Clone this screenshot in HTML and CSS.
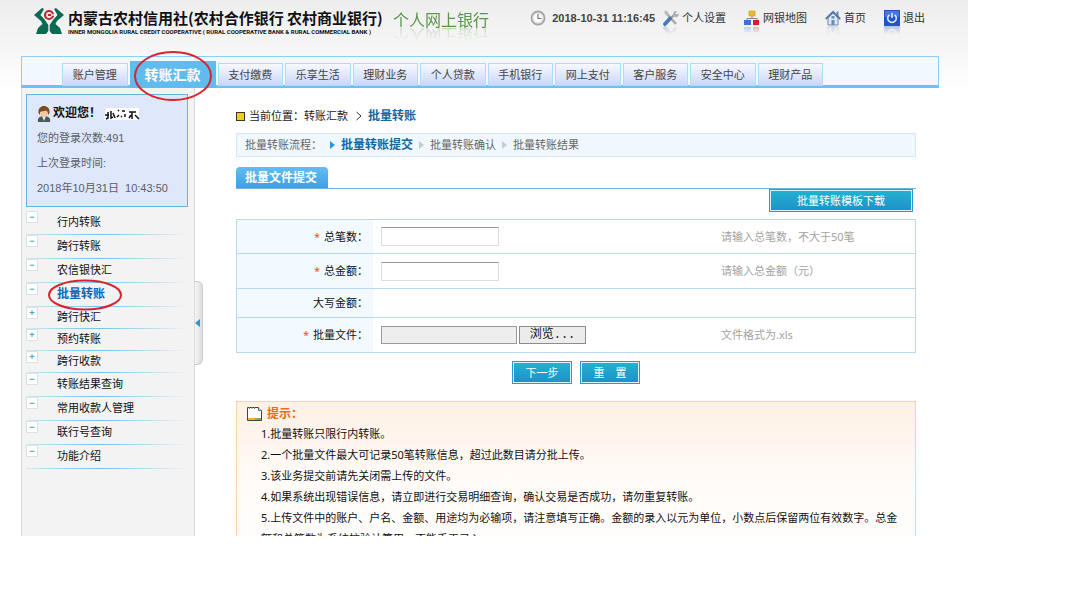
FILE: index.html
```html
<!DOCTYPE html>
<html lang="zh-CN">
<head>
<meta charset="utf-8">
<title>个人网上银行 - 批量转账</title>
<link rel="stylesheet" href="styles.css">
</head>
<body>
<div class="page">
  <header class="header">
    <svg class="logo" viewBox="0 0 30 28" aria-hidden="true">
      <path fill="#0d6a52" d="M8 1 0 8l7 6 1.500 3L4 21l-2 6h10l2.300-3v-6L11 13 6.500 8 10 2zM22 1l8 7-7 6-1.500 3 4.500 4 2 6H18l-2.300-3v-6l3.300-5 4.500-5L20 2z"/>
      <circle cx="15" cy="8" r="4" fill="none" stroke="#c4232c" stroke-width="2.200"/>
      <path fill="#f3f3f3" d="M16 7.300h4v1.400h-4z"/>
      <path fill="#c4232c" d="M14 7h3v2h-3z"/>
    </svg>
    <div class="brand">
      <h1 class="brand-name">内蒙古农村信用社(农村合作银行 农村商业银行)</h1>
      <p class="brand-en">INNER MONGOLIA RURAL CREDIT COOPERATIVE ( RURAL COOPERATIVE BANK &amp; RURAL COMMERCIAL BANK )</p>
    </div>
    <div class="product">个人网上银行</div>
    <div class="tools">
      <span class="clock">
        <svg class="icon" viewBox="0 0 16 16" aria-hidden="true"><circle cx="8" cy="8" r="6.500" fill="#fafafa" stroke="#a3a3a3" stroke-width="1.800"/><circle cx="8" cy="8" r="4.800" fill="none" stroke="#d8d8d8" stroke-width=".8"/><path d="M8 4v4.500h3.500" fill="none" stroke="#777" stroke-width="1.200"/></svg>
        <time>2018-10-31 11:16:45</time>
      </span>
      <a class="tool" href="#">
        <svg class="icon reflect" viewBox="0 0 16 16" aria-hidden="true"><path d="M3 3l10 11" stroke="#a9a9a9" stroke-width="2.600"/><path d="M1 2l2-1.500L5.500 3 5 5 3 5z" fill="#b9b9b9"/><path d="M7 9l5-5" stroke="#9b9b9b" stroke-width="2"/><path d="M11 1.500 14 1l-1.500 2.500 1.500 1L16 3l-.5 3-3 1.500-3-2z" fill="#a9afb5"/><path d="M2 14l5-5.500" stroke="#4a7ab0" stroke-width="3.800" stroke-linecap="round"/></svg>个人设置</a>
      <a class="tool" href="#">
        <svg class="icon reflect" viewBox="0 0 16 16" aria-hidden="true"><path d="M8 5v4M3 11V8.500h10V11" fill="none" stroke="#888"/><path fill="#e9bd2c" stroke="#c49716" stroke-width=".6" d="M5 1h6v5H5z"/><path fill="#3c6fe0" d="M0 10h7v5H0z"/><path fill="#d5202a" d="M9 10h6v5H9z"/></svg>网银地图</a>
      <a class="tool" href="#">
        <svg class="icon reflect" viewBox="0 0 16 16" aria-hidden="true"><path fill="#6686b2" d="M11.500 1.500h2V6h-2z"/><path fill="#dfe8f3" stroke="#6a88b3" d="M3 8l5-5 5 5v7H3z"/><path d="M.8 9 8 1.800 15.200 9" fill="none" stroke="#577cac" stroke-width="2"/><path fill="#6b8db9" d="M6.500 10h3v5h-3zM6.500 6h3v2.500h-3z"/></svg>首页</a>
      <a class="tool" href="#">
        <svg class="icon reflect" viewBox="0 0 16 16" aria-hidden="true"><path fill="#2353c4" d="M0 0h16v16H0z"/><path fill="#4976dc" d="M1 1h14v6H1z"/><path d="M5.300 4.800a4.300 4.300 0 1 0 5.400 0M8 2.800V8" fill="none" stroke="#e4eeff" stroke-width="1.500"/></svg>退出</a>
    </div>
  </header>

  <nav class="nav">
    <ul class="tabs">
      <li class="tab"><a href="#">账户管理</a></li>
      <li class="tab tab-active"><a href="#">转账汇款</a>
        <svg class="ring ring-tab" viewBox="0 0 80 52" aria-hidden="true"><ellipse cx="40" cy="26" rx="38" ry="24" fill="none" stroke="#d9232e" stroke-width="2"/></svg></li>
      <li class="tab"><a href="#">支付缴费</a></li>
      <li class="tab"><a href="#">乐享生活</a></li>
      <li class="tab"><a href="#">理财业务</a></li>
      <li class="tab"><a href="#">个人贷款</a></li>
      <li class="tab"><a href="#">手机银行</a></li>
      <li class="tab"><a href="#">网上支付</a></li>
      <li class="tab"><a href="#">客户服务</a></li>
      <li class="tab"><a href="#">安全中心</a></li>
      <li class="tab"><a href="#">理财产品</a></li>
    </ul>
  </nav>

  <div class="body">
    <aside class="sidebar">
      <section class="user">
        <p class="hello">
          <svg class="avatar" viewBox="0 0 14 16" aria-hidden="true"><path fill="#4e5a55" d="M1 16c-1-4 2-6 6-6s7 2 6 6z"/><path fill="#e8eef0" d="M5 10h4l-2 5z"/><circle cx="7" cy="6.500" r="4.200" fill="#f3c9a0"/><path fill="#7b4a1e" d="M1.500 7C1 2 4 0 7 0s6 2 5.500 7L11 9c.3-3-1-4-2-4.500C7 5.500 4 5 3 6v3z"/></svg>
          欢迎您！
          <svg class="masked" viewBox="0 0 38 12" aria-hidden="true"><path fill="#fff" d="M3 0h33v12H1z"/><path d="M2 7h4M5 4v6l-2 1M8 3v7l2-1M10 5l2 5M15 2l1 1M14 9l2-2M19 3h3M22 6v3M18 8l1 1M26 4h7M29 4v7M26 10l2-3M32 7l4 4" fill="none" stroke="#111" stroke-width="1.500"/></svg>
        </p>
        <p>您的登录次数:491</p>
        <p>上次登录时间:</p>
        <p>2018年10月31日&nbsp; 10:43:50</p>
      </section>
      <ul class="menu">
        <li class="item"><i class="box">−</i><a href="#">行内转账</a></li>
        <li class="item"><i class="box">−</i><a href="#">跨行转账</a></li>
        <li class="item"><i class="box">−</i><a href="#">农信银快汇</a></li>
        <li class="item item-active"><i class="box">−</i><a href="#">批量转账</a>
          <svg class="ring ring-item" viewBox="0 0 76 32" aria-hidden="true"><ellipse cx="38" cy="16" rx="36" ry="14.500" fill="none" stroke="#d9232e" stroke-width="2"/></svg></li>
        <li class="item item-short"><i class="box">+</i><a href="#">跨行快汇</a></li>
        <li class="item item-short"><i class="box">+</i><a href="#">预约转账</a></li>
        <li class="item item-short"><i class="box">+</i><a href="#">跨行收款</a></li>
        <li class="item"><i class="box">−</i><a href="#">转账结果查询</a></li>
        <li class="item"><i class="box">−</i><a href="#">常用收款人管理</a></li>
        <li class="item"><i class="box">−</i><a href="#">联行号查询</a></li>
        <li class="item"><i class="box">−</i><a href="#">功能介绍</a></li>
      </ul>
    </aside>
    <button class="handle" type="button" aria-label="收起菜单"><svg class="handle-arrow" viewBox="0 0 5 8" aria-hidden="true"><path fill="#2b95d3" d="M5 0v8L0 4z"/></svg></button>

    <main class="main">
      <p class="crumbs"><i class="marker"></i><span>当前位置：</span><a href="#">转账汇款</a><svg class="chevron" viewBox="0 0 6 10" aria-hidden="true"><path d="M.5 1 5 5 .5 9" fill="none" stroke="#333"/></svg><strong>批量转账</strong></p>
      <div class="steps">
        <span class="steps-title">批量转账流程：</span>
        <span class="step step-active">批量转账提交</span>
        <span class="step">批量转账确认</span>
        <span class="step">批量转账结果</span>
      </div>
      <div class="section-head"><h2 class="section-tab">批量文件提交</h2></div>
      <div class="download"><button class="btn btn-wide" type="button">批量转账模板下载</button></div>

      <form class="form">
        <div class="row">
          <label class="label" for="count"><b class="star">*</b> 总笔数：</label>
          <div class="field"><input class="text" id="count" type="text"></div>
          <div class="hint">请输入总笔数，不大于50笔</div>
        </div>
        <div class="row">
          <label class="label" for="amount"><b class="star">*</b> 总金额：</label>
          <div class="field"><input class="text" id="amount" type="text"></div>
          <div class="hint">请输入总金额（元）</div>
        </div>
        <div class="row row-short">
          <span class="label">大写金额：</span>
          <div class="field"></div>
          <div class="hint"></div>
        </div>
        <div class="row">
          <label class="label" for="file"><b class="star">*</b> 批量文件：</label>
          <div class="field"><input class="file" id="file" type="text" readonly><button class="browse" type="button">浏览...</button></div>
          <div class="hint">文件格式为.xls</div>
        </div>
      </form>
      <div class="actions">
        <button class="btn" type="button">下一步</button>
        <button class="btn" type="button">重&emsp;置</button>
      </div>

      <section class="tips">
        <h3 class="tips-title"><svg class="note" viewBox="0 0 15 15" aria-hidden="true"><path fill="#fff" stroke="#444" d="M.5 1.500h11l3 3v10H.5z"/><path fill="#f2b233" d="M1 12h7v2H1z"/><path fill="#7fae4a" d="M8 12h6v2H8z"/><path fill="#fff" stroke="#444" stroke-width=".8" d="M11.500 1.500v3h3"/><path d="M2.500 1v2M5 1v2M7.500 1v2" stroke="#777"/></svg>提示：</h3>
        <ol class="tips-list">
          <li>1.批量转账只限行内转账。</li>
          <li>2.一个批量文件最大可记录50笔转账信息，超过此数目请分批上传。</li>
          <li>3.该业务提交前请先关闭需上传的文件。</li>
          <li>4.如果系统出现错误信息，请立即进行交易明细查询，确认交易是否成功，请勿重复转账。</li>
          <li>5.上传文件中的账户、户名、金额、用途均为必输项，请注意填写正确。金额的录入以元为单位，小数点后保留两位有效数字。总金额和总笔数为系统校验计算用，不能手工录入。</li>
        </ol>
      </section>
    </main>
  </div>
</div>
</body>
</html>
```
FILE: styles.css
```css
* { box-sizing: border-box; margin: 0; padding: 0; }
body {
  background: #fff;
  font: 11px/20px "Noto Sans", "Noto Sans CJK SC", sans-serif;
  color: #222;
}
ul, ol { list-style: none; }
a { color: inherit; text-decoration: none; }
svg { display: block; flex: none; }
button, input { font: inherit; }

.page {
  margin-right: 112px;
  height: calc(100vh - 72px);
  overflow: hidden;
  background: linear-gradient(#ededed, #fff 92px);
}

/* header */
.header { display: flex; align-items: flex-start; height: 56px; padding: 7px 43px 0 34px; }
.logo { width: 30px; height: 28px; }
.brand { margin-left: 4px; white-space: nowrap; width: 316px; }
.brand-name { font: 700 15px/22px "Noto Sans CJK SC", sans-serif; color: #111; }
.brand-en { font: 700 6px/6px Roboto, sans-serif; color: #111; }
.product {
  margin-left: 9px;
  font-size: 16px;
  line-height: 20px;
  margin-top: 3px;
  white-space: nowrap;
  color: #5b9649;
  -webkit-box-reflect: below -5px linear-gradient(transparent 20%, rgba(0, 0, 0, .35));
}
.tools { display: flex; gap: 18px; margin-left: auto; line-height: 22px; color: #333; white-space: nowrap; }
.clock { display: flex; align-items: center; gap: 6px; margin-right: -10px; color: #444; font: 700 11px/22px "Liberation Sans", sans-serif; }
.tool { display: flex; align-items: center; gap: 3px; }
.icon { width: 16px; height: 16px; }
.reflect { -webkit-box-reflect: below 0 linear-gradient(transparent 45%, rgba(0, 0, 0, .3)); }

/* main navigation */
.nav {
  margin: 0 29px 0 21px;
  height: 32px;
  padding: 4px 115px 0 40px;
  border: 1px solid #8fcdf6;
  border-bottom: 3px solid #6cc0f3;
  background: #f1f9ff;
}
.tabs { display: flex; gap: 2px; align-items: flex-start; }
.tab {
  flex: 1 1 0;
  margin-top: 2px;
  height: 23px;
  border: 1px solid #a9def9;
  background: linear-gradient(#f7f9ff, #cbd6fa);
  text-align: center;
  line-height: 21px;
  white-space: nowrap;
  color: #444;
}
.tab-active {
  position: relative;
  flex: 0 0 86px;
  margin-top: 0;
  height: 27px;
  border: 0;
  background: #60bbef;
  font-size: 14px;
  font-weight: 700;
  line-height: 27px;
  color: #fff;
}
.ring { position: absolute; z-index: 2; pointer-events: none; }
.ring-tab { width: 80px; height: 52px; left: 3px; top: -11px; }
.ring-item { width: 76px; height: 32px; left: 21px; top: -4px; }

/* columns */
.body { display: flex; align-items: flex-start; background: #fff; margin-left: 21px; }
.sidebar {
  flex: 0 0 174px;
  min-height: calc(100vh - 160px);
  padding: 6px 6px 6px 4px;
  border: solid #d9d9d9;
  border-width: 0 1px;
  background: #f3f3f3;
}
.user {
  padding: 6px 10px 5px;
  border: 1px solid #68b3df;
  background: #dfe7fb;
  font-family: "Liberation Sans", "Noto Sans CJK SC", sans-serif;
  line-height: 25px;
  white-space: nowrap;
  color: #5a5f68;
}
.hello { display: flex; align-items: center; gap: 2px; font-size: 12px; font-weight: 700; color: #111; }
.avatar { width: 14px; height: 16px; }
.masked { width: 38px; height: 12px; }
.menu { margin-top: 4px; }
.item {
  position: relative;
  display: flex;
  align-items: flex-start;
  gap: 19px;
  height: 24px;
  font-size: 11px;
  line-height: 22px;
  color: #111;
  background: linear-gradient(90deg, #cfe9f5, #6fc3e6 45%, #f3f3f3) bottom / 100% 1px no-repeat;
}
.item-short { height: 22px; line-height: 19px; }
.box {
  width: 12px;
  height: 12px;
  border: 1px solid #dbe2e6;
  background: #fff;
  font: 700 9px/10px "Liberation Sans", sans-serif;
  text-align: center;
  color: #4ba3c4;
}
.item-active { font-size: 12px; font-weight: 700; color: #0a66bd; }
.handle {
  flex: 0 0 8px;
  height: 84px;
  margin-top: 193px;
  border: 1px solid #c9c9c9;
  border-left: 0;
  border-radius: 0 6px 6px 0;
  background: linear-gradient(90deg, #f5f5f5, #dcdcdc);
}
.handle-arrow { width: 5px; height: 8px; }

/* content */
.main { flex: 1; min-width: 0; padding: 18px 52px 0 33px; }
.crumbs { display: flex; align-items: center; }
.marker { width: 9px; height: 9px; margin-right: 4px; border: 1px solid #3d3a10; background: #f2cf1c; }
.chevron { width: 6px; height: 10px; margin: 0 6px 0 8px; }
.crumbs strong { font-size: 12px; color: #0f67a4; }
.steps {
  display: flex;
  align-items: center;
  gap: 6px;
  height: 24px;
  margin-top: 7px;
  padding-left: 8px;
  border: 1px solid #d5e9f5;
  background: #f0f8fe;
  color: #666;
}
.steps-title { margin-right: 2px; }
.step { display: flex; align-items: center; gap: 6px; }
.step::before { content: ""; border: solid transparent; border-width: 4px 0 4px 5px; border-left-color: #c5ccd0; }
.step-active { font-size: 12px; font-weight: 700; color: #0f67a4; }
.step-active::before { border-left-color: #1f9de0; }
.section-head { display: flex; margin-top: 10px; border-bottom: 1px solid #70b8d8; }
.section-tab {
  padding: 0 11px 0 9px;
  border-radius: 4px 4px 0 0;
  background: linear-gradient(#62bdf0, #3f9fe4);
  font-size: 12px;
  line-height: 21px;
  color: #fff;
}
.download { display: flex; justify-content: flex-end; padding-right: 3px; }
.btn {
  width: 60px;
  height: 23px;
  border: 1px solid #2f97cf;
  box-shadow: inset 0 0 0 1px #d9f2fb;
  background: linear-gradient(#22b3d2, #1e90c8);
  line-height: 19px;
  color: #fff;
}
.btn-wide { width: 144px; }
.form { margin-top: 7px; border: 1px solid #b9d9ec; border-bottom: 0; }
.row { display: flex; height: 34px; border-bottom: 1px solid #b9d9ec; }
.row + .row { height: 35px; }
.row + .row-short { height: 29px; }
.label {
  flex: 0 0 136px;
  display: flex;
  align-items: center;
  justify-content: flex-end;
  gap: 4px;
  padding-right: 5px;
  background: #f3faff;
  color: #111;
}
.star { font-weight: 400; color: #f0502a; }
.field { flex: 1; display: flex; align-items: center; gap: 2px; padding-left: 8px; }
.text { width: 118px; height: 19px; border: 1px solid #ddd; border-top-color: #999; background: #fff; }
.file { width: 136px; height: 18px; border: 1px solid #9a9a9a; background: #eee; }
.browse {
  width: 67px;
  height: 18px;
  border: 1px solid #8c8c8c;
  background: #ececec;
  font: 12px/14px "Liberation Mono", "Noto Sans CJK SC", monospace;
  color: #111;
}
.hint { flex: 0 0 194px; display: flex; align-items: center; color: #a3a3a3; }
.actions { display: flex; justify-content: center; gap: 8px; margin-top: 8px; }
.tips {
  margin-top: 17px;
  padding: 2px 14px 12px 10px;
  border: 1px solid #f8d3b2;
  background: linear-gradient(#fdf0e4, #fffaf6 70px, #fff);
}
.tips-title { display: flex; align-items: center; gap: 5px; font-size: 12px; line-height: 19px; color: #ed6d12; }
.note { width: 15px; height: 15px; }
.tips-list { padding-left: 14px; line-height: 21px; color: #111; }
```
